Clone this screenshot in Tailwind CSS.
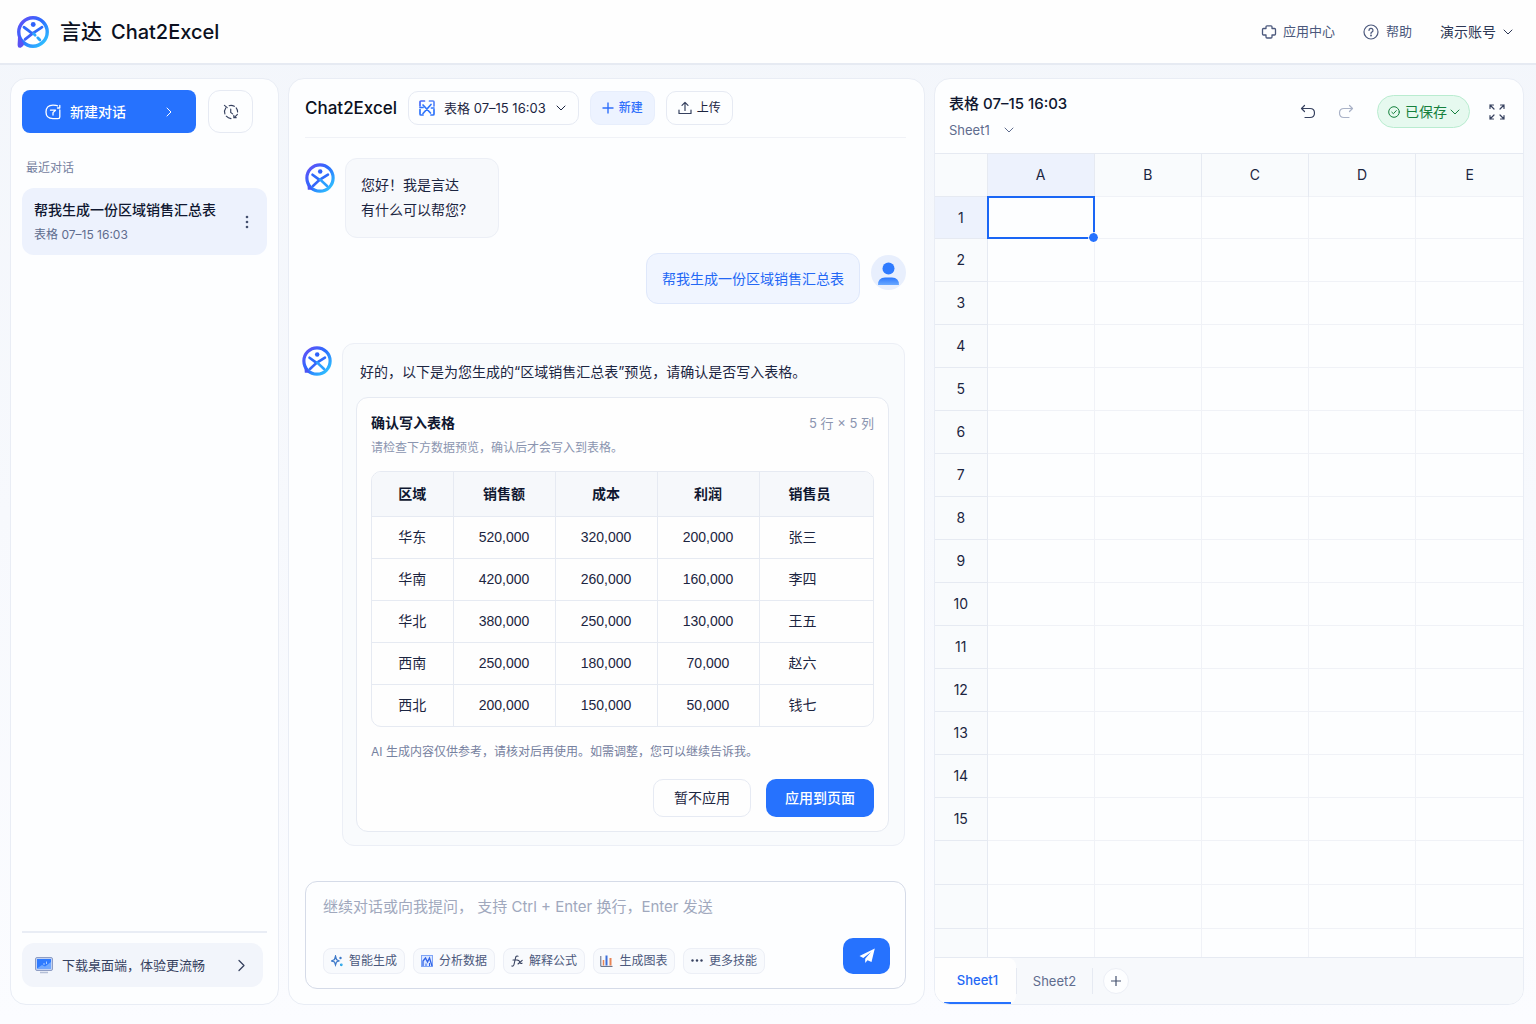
<!DOCTYPE html>
<html lang="zh-CN">
<head>
    <meta charset="UTF-8">
    <meta name="viewport" content="width=device-width, initial-scale=1.0">
    <title>言达 Chat2Excel</title>
    <script src="https://cdn.jsdelivr.net/npm/@tailwindcss/browser@4"></script>
</head>
<body class="min-h-screen flex flex-col bg-linear-to-b from-[#f3f6fb] to-[#fbfcff] font-['Inter','Noto_Sans_CJK_SC',sans-serif] text-sm text-[#1c2541]">

    <!-- Shared logo shapes -->
    <svg class="absolute w-0 h-0" aria-hidden="true">
        <defs>
            <linearGradient id="brand" x1="0" y1="0" x2="1" y2="1">
                <stop offset="0" stop-color="#6a4df5"/>
                <stop offset="0.45" stop-color="#2b6cff"/>
                <stop offset="1" stop-color="#2fd0ff"/>
            </linearGradient>
            <linearGradient id="person" x1="0" y1="0" x2="0" y2="1">
                <stop offset="0" stop-color="#2b78ff"/>
                <stop offset="1" stop-color="#6aa9ff"/>
            </linearGradient>
            <symbol id="logo" viewBox="0 0 32 32">
                <circle cx="16" cy="16" r="13.4" fill="#fff" stroke="url(#brand)" stroke-width="3.2"/>
                <path d="M2 18 L1.500 28.500 Q1.500 31.500 4.500 30.800 Q7 30 7.500 27.500 Z" fill="#5a52f3"/>
                <circle cx="16.200" cy="9" r="2.300" fill="#2f62fa"/>
                <path d="M7.500 11.500 C10 13 13 16 15.500 17.500 C18 16 21.500 13.500 24.500 11.500" fill="none" stroke="#2f6bfb" stroke-width="2.600" stroke-linecap="round"/>
                <path d="M16 17 L8.500 23" fill="none" stroke="#3f62f8" stroke-width="2.600" stroke-linecap="round"/>
                <path d="M16.500 17.500 L18 19 M20.500 21.500 L22.500 23.500" fill="none" stroke="#2ba6ff" stroke-width="2.600" stroke-linecap="round"/>
            </symbol>
            <symbol id="avatar" viewBox="0 0 32 32">
                <circle cx="16" cy="16" r="14" fill="#fff" stroke="url(#brand)" stroke-width="3.4"/>
                <path d="M2.500 22 L3 28.500 L9 28.500 Z" fill="#4a55f5"/>
                <circle cx="16.200" cy="9" r="2.400" fill="#2f62fa"/>
                <path d="M8 12.500 L15.500 18 L24.500 12.500" fill="none" stroke="#2f6bfb" stroke-width="2.800" stroke-linecap="round" stroke-linejoin="round"/>
                <path d="M16 17.500 L8.500 24.500" fill="none" stroke="#3666fa" stroke-width="2.800" stroke-linecap="round"/>
                <path d="M16 17.500 L23.500 24.500" fill="none" stroke="#2ba0ff" stroke-width="2.800" stroke-linecap="round"/>
            </symbol>
            <symbol id="chevron" viewBox="0 0 12 12">
                <path d="M2 4 L6 8 L10 4" fill="none" stroke="currentColor" stroke-linecap="round" stroke-linejoin="round"/>
            </symbol>
        </defs>
    </svg>

    <!-- Top bar -->
    <header class="h-[65px] shrink-0 flex items-center justify-between pl-4 pr-[22px] bg-[#fefefe] border-b-2 border-[#e6eaf2]">
        <a href="#" class="flex items-center text-[21px] font-medium text-[#0b1020]">
            <svg class="w-[34px] h-[34px] mr-[10px]"><use href="#logo"/></svg>
            <span class="mr-[9px]">言达</span>
            <span class="text-xl">Chat2Excel</span>
        </a>
        <nav class="flex items-center text-[#4b587c]">
            <a href="#" class="flex items-center gap-[6px] text-[13px] mr-[28px]">
                <svg class="w-4 h-4" viewBox="0 0 16 16" fill="none" stroke="currentColor" stroke-width="1.300" stroke-linejoin="round"><path d="M5 2.800 Q5 1.800 6 1.800 H10 Q11 1.800 11 2.800 V4.500 H13.500 Q14.500 4.500 14.500 5.500 V10 Q14.500 11 13.500 11 H11 V13 Q11 14 10 14 H6 Q5 14 5 13 V11 H2.500 Q1.500 11 1.500 10 V5.500 Q1.500 4.500 2.500 4.500 H5 Z"/></svg>
                应用中心
            </a>
            <a href="#" class="flex items-center gap-[7px] text-[13px] mr-[28px]">
                <svg class="w-4 h-4" viewBox="0 0 16 16" fill="none" stroke="currentColor" stroke-width="1.200" stroke-linecap="round"><circle cx="8" cy="8" r="7"/><path d="M6 6.500 A2 2 0 1 1 8.500 8.300 Q8 8.500 8 9.500"/><circle cx="8" cy="11.500" r="0.400"/></svg>
                帮助
            </a>
            <button type="button" class="flex items-center gap-[6px] text-[#2c3654]">演示账号
                <svg class="w-3 h-3"><use href="#chevron"/></svg>
            </button>
        </nav>
    </header>

    <main class="flex-1 grid grid-cols-[269px_minmax(0,637fr)_minmax(0,590fr)] gap-[9px] pl-[10px] pr-3 pt-[13px] pb-[19px]">

        <!-- Sidebar -->
        <aside class="flex flex-col px-[11px] pt-[11px] pb-[17px] bg-[#fdfeff] border border-[#e9edf5] rounded-2xl">
            <div class="flex gap-3">
                <button type="button" class="w-[174px] h-[43px] flex items-center pl-[23px] pr-[21px] rounded-lg bg-[#2672fe] text-white font-medium">
                    <svg class="w-4 h-4 mr-[9px]" viewBox="0 0 16 16" fill="none" stroke="currentColor" stroke-width="1.300" stroke-linecap="round" stroke-linejoin="round"><path d="M12.500 1.800 Q11.500 1.200 8 1.200 Q1 1.200 1 8 Q1 14.600 8 14.600 H13 Q14.800 14.600 14.800 13 V6"/><path d="M14.800 1.500 V4 H12.500"/><path d="M5.500 6.200 H10.500 L8 8.600 V11"/></svg>
                    <span class="flex-1 text-left">新建对话</span>
                    <svg class="w-3 h-3 -rotate-90"><use href="#chevron"/></svg>
                </button>
                <button type="button" aria-label="历史记录" class="w-[45px] h-[43px] flex items-center justify-center rounded-xl border border-[#e6eaf3] text-[#36415f]">
                    <svg class="w-4 h-4" viewBox="0 0 17 17" fill="none" stroke="currentColor" stroke-width="1.200" stroke-linecap="round"><path d="M1.500 1.500 L4.500 3.800"/><path d="M3 4.200 A7 7 0 0 0 2 10.500"/><path d="M3.500 13 A7 7 0 0 0 8.500 15.500"/><path d="M6.500 1.800 A7 7 0 0 1 12 2.500"/><path d="M14 4.200 A7 7 0 0 1 15.500 8.500"/><path d="M15.300 11 L12.500 14 M11.500 12 V14.500 H14"/><path d="M8.200 5.500 V9 L10.200 10.500"/></svg>
                </button>
            </div>

            <h2 class="mt-[26px] ml-1 text-xs leading-[18px] text-[#7681a0]">最近对话</h2>
            <div class="mt-[11px] h-[67px] flex items-center justify-between px-3 rounded-xl bg-[#edf2fd]">
                <a href="#" class="block">
                    <span class="block leading-[25px] font-medium text-[#0f1730]">帮我生成一份区域销售汇总表</span>
                    <span class="block text-xs leading-[25px] text-[#5f6c8e]">表格 07–15 16:03</span>
                </a>
                <button type="button" aria-label="更多" class="text-[#45516f]">
                    <svg class="w-4 h-4" viewBox="0 0 16 16" fill="currentColor"><circle cx="8" cy="3" r="1.300"/><circle cx="8" cy="8" r="1.300"/><circle cx="8" cy="13" r="1.300"/></svg>
                </button>
            </div>

            <div class="mt-auto border-t-2 border-[#e9edf5] pt-[10px] pr-1">
                <a href="#" class="h-[44px] flex items-center pl-[13px] pr-[14px] rounded-xl bg-[#f2f5fb] text-[13px] text-[#36415f]">
                    <svg class="w-[18px] h-[18px] mr-[9px]" viewBox="0 0 18 18"><rect x="0.500" y="1.500" width="17" height="13" rx="1.500" fill="#c3d2f2" stroke="#8e9dc4"/><rect x="2" y="3" width="14" height="9.500" fill="#2f7bff"/><path d="M2 12.500 L7 9 L10 10.500 L16 6 V12.500 Z" fill="#6fa8ff"/><path d="M9 9 V7 M11.500 8 V5.500" fill="none" stroke="#a9cbff"/><path d="M5 16.500 H13" stroke="#b4bfd6" stroke-width="1.500"/></svg>
                    <span class="flex-1">下载桌面端，体验更流畅</span>
                    <svg class="w-[15px] h-[15px] -rotate-90"><use href="#chevron"/></svg>
                </a>
            </div>
        </aside>

        <!-- Chat -->
        <section class="flex flex-col px-4 pb-[15px] bg-[#fdfeff] border border-[#e9edf5] rounded-2xl">
            <div class="h-[59px] shrink-0 mr-[2px] flex items-center border-b border-[#f0f2f7]">
                <h1 class="mr-[11px] text-[17px] font-medium text-[#0b1020]">Chat2Excel</h1>
                <button type="button" class="h-[34px] mr-[11px] flex items-center pl-[10px] pr-[11px] rounded-[10px] border border-[#e6eaf3] text-[#1c2541]">
                    <svg class="w-4 h-4 mr-[9px]" viewBox="0 0 16 16" fill="none" stroke="#2f74fb" stroke-width="1.700" stroke-linecap="round"><path d="M5.500 1 H2 Q1 1 1 2 V6" stroke="#4a6cf8"/><path d="M10.500 1 H14 Q15 1 15 2 V6" stroke="#5a86f8"/><path d="M1 9.500 V14 Q1 15 2 15 H4"/><path d="M15 9.500 V14 Q15 15 14 15 H12"/><path d="M4 5 L11.500 13 M12 4.500 L4 13.500 M1 7.500 H4 M12.500 8 H15"/></svg>
                    <span class="text-[13px]">表格 07–15 16:03</span>
                    <svg class="w-3 h-3 ml-[9px]"><use href="#chevron"/></svg>
                </button>
                <button type="button" class="h-[34px] mr-[11px] flex items-center gap-[5px] px-[11px] rounded-[10px] border border-[#e7eefc] bg-[#edf3ff] text-xs font-medium text-[#2f6ffb]">
                    <svg class="w-3 h-3" viewBox="0 0 12 12" stroke="currentColor" stroke-width="1.400"><path d="M6 0.500 V11.500 M0.500 6 H11.500"/></svg>
                    新建
                </button>
                <button type="button" class="h-[34px] flex items-center gap-[5px] px-[11px] rounded-[10px] border border-[#e6eaf3] text-xs text-[#1c2541]">
                    <svg class="w-[14px] h-[14px]" viewBox="0 0 14 14" fill="none" stroke="#36415f" stroke-width="1.200" stroke-linecap="round" stroke-linejoin="round"><path d="M7 9.500 V1.500 M4 4.300 L7 1.300 L10 4.300 M1 9 V12.500 H13 V9"/></svg>
                    上传
                </button>
            </div>

            <div class="flex-1 pt-5 pb-[35px]">
                <div class="flex items-start gap-[10px]">
                    <svg class="w-[30px] h-[30px] mt-[5px]"><use href="#avatar"/></svg>
                    <p class="w-[154px] h-[80px] pl-[15px] pt-[13px] rounded-xl border border-[#eceff6] bg-[#f7f9fc] leading-[25px]">您好！我是言达<br>有什么可以帮您?</p>
                </div>

                <div class="mt-[15px] mr-[2px] flex justify-end items-start gap-[11px]">
                    <p class="h-[51px] px-[15px] rounded-xl border border-[#dfe8fb] bg-[#f0f5ff] leading-[50px] text-[#2468f5]">帮我生成一份区域销售汇总表</p>
                    <svg class="w-[35px] h-[35px] mt-[2px]" viewBox="0 0 35 35"><circle cx="17.500" cy="17.500" r="17.500" fill="#e8effd"/><circle cx="17.500" cy="13.500" r="6" fill="#2f7bff"/><path d="M7 30 Q7 22.500 14 22.500 H21 Q28 22.500 28 30 Z" fill="url(#person)"/></svg>
                </div>

                <div class="mt-[39px] -ml-[3px] mr-[3px] flex items-start gap-[10px]">
                    <svg class="w-[30px] h-[30px] mt-[3px] shrink-0"><use href="#avatar"/></svg>
                    <div class="flex-1 min-w-0 p-[13px] rounded-xl border border-[#eceff6] bg-[#f9fbfd]">
                        <p class="ml-[4px] mt-[2px] leading-[25px]">好的，以下是为您生成的“区域销售汇总表”预览，请确认是否写入表格。</p>

                        <div class="mt-[13px] mr-[2px] px-[14px] pt-[13px] pb-[14px] rounded-xl border border-[#e6eaf2] bg-[#fefefe]">
                            <div class="flex items-center justify-between leading-[24px]">
                                <h2 class="font-bold text-[#0f1730]">确认写入表格</h2>
                                <span class="text-[13px] text-[#8b95b0]">5 行 × 5 列</span>
                            </div>
                            <p class="mt-[2px] leading-[22px] text-xs text-[#8b95b0]">请检查下方数据预览，确认后才会写入到表格。</p>

                            <div class="mt-3 overflow-hidden rounded-[10px] border border-[#e6eaf2]">
                                <table class="w-full table-fixed text-center font-['Liberation_Sans','Noto_Sans_CJK_SC',sans-serif] [&_th]:border-r [&_td]:border-r [&_th]:border-[#e6eaf2] [&_td]:border-[#e6eaf2] [&_tr>*:last-child]:border-r-0 [&_tr>*:last-child]:text-left [&_tr>*:last-child]:pl-[29px]">
                                    <colgroup>
                                        <col class="w-[81px]"><col class="w-[102px]"><col class="w-[102px]"><col class="w-[102px]"><col>
                                    </colgroup>
                                    <thead>
                                        <tr class="h-[44px] bg-[#f6f8fb] text-[#0f1730] font-bold">
                                            <th scope="col">区域</th><th scope="col">销售额</th><th scope="col">成本</th><th scope="col">利润</th><th scope="col">销售员</th>
                                        </tr>
                                    </thead>
                                    <tbody class="[&_tr]:h-[42px] [&_tr]:border-t [&_tr]:border-[#e6eaf2]">
                                        <tr><td>华东</td><td>520,000</td><td>320,000</td><td>200,000</td><td>张三</td></tr>
                                        <tr><td>华南</td><td>420,000</td><td>260,000</td><td>160,000</td><td>李四</td></tr>
                                        <tr><td>华北</td><td>380,000</td><td>250,000</td><td>130,000</td><td>王五</td></tr>
                                        <tr><td>西南</td><td>250,000</td><td>180,000</td><td>70,000</td><td>赵六</td></tr>
                                        <tr><td>西北</td><td>200,000</td><td>150,000</td><td>50,000</td><td>钱七</td></tr>
                                    </tbody>
                                </table>
                            </div>

                            <p class="mt-[14px] leading-[22px] text-xs text-[#7681a0]">AI 生成内容仅供参考，请核对后再使用。如需调整，您可以继续告诉我。</p>
                            <div class="mt-4 flex justify-end gap-[15px]">
                                <button type="button" class="h-[38px] w-[98px] rounded-[10px] border border-[#e6eaf3]">暂不应用</button>
                                <button type="button" class="h-[38px] w-[108px] rounded-[10px] bg-[#2672fe] text-white font-medium">应用到页面</button>
                            </div>
                        </div>
                    </div>
                </div>
            </div>

            <!-- Composer -->
            <form class="mr-[2px] pl-[17px] pr-[15px] pt-3 pb-[14px] rounded-xl border border-[#d5dbe8]">
                <input type="text" aria-label="输入消息" placeholder="继续对话或向我提问， 支持 Ctrl + Enter 换行，Enter 发送" class="block w-full h-[24px] bg-transparent outline-none text-[15px] placeholder:text-[#a0a8bd]">
                <div class="mt-5 flex items-end justify-between">
                    <div class="flex gap-2 text-xs text-[#4b587c]">
                        <button type="button" class="w-[82px] h-[26px] flex items-center justify-center gap-[6px] rounded-lg border border-[#eceff6] bg-[#f8fafd]">
                            <svg class="w-3 h-3" viewBox="0 0 12 12" fill="none" stroke="#3d79c9" stroke-width="1.200"><path d="M4.500 1 L5.500 4.500 L8 6 L5.500 7 L4.500 10 L3.500 7 L0.500 6 L3.500 4.500 Z"/><circle cx="9.500" cy="3" r="0.600"/><circle cx="10.300" cy="9.800" r="0.800" stroke="#29a5e8"/></svg>
                            智能生成
                        </button>
                        <button type="button" class="w-[82px] h-[26px] flex items-center justify-center gap-[6px] rounded-lg border border-[#eceff6] bg-[#f8fafd]">
                            <svg class="w-3 h-3" viewBox="0 0 12 12" fill="none"><rect x="0.500" y="0.500" width="11" height="11" fill="#dbe7ff" stroke="#7fa5f6"/><path d="M2 11 V6 L4.500 3 L6.500 7 L8.500 3 L11 11" stroke="#2f62e8" stroke-width="1.300"/><path d="M5 11 V8.500 M8.500 11 V8" stroke="#2f62e8"/></svg>
                            分析数据
                        </button>
                        <button type="button" class="w-[82px] h-[26px] flex items-center justify-center gap-[6px] rounded-lg border border-[#eceff6] bg-[#f8fafd]">
                            <svg class="w-3 h-3" viewBox="0 0 12 12" fill="none" stroke="#36415f" stroke-width="1.100" stroke-linecap="round"><path d="M7 1.200 Q5 0.500 4.500 3 L3 9.500 Q2.500 11.500 0.800 11 M2 5 H6.500 M7 5.500 Q8 5 8.700 7 Q9.500 9 11 8.200 M11.200 5.300 L7 9"/></svg>
                            解释公式
                        </button>
                        <button type="button" class="w-[82px] h-[26px] flex items-center justify-center gap-[6px] rounded-lg border border-[#eceff6] bg-[#f8fafd]">
                            <svg class="w-[13px] h-3" viewBox="0 0 13 12" fill="none"><path d="M0.800 1 V11.400 H12.500" stroke="#5b6680"/><path d="M3.500 10.500 V5" stroke="#e88455" stroke-width="1.500"/><path d="M6.500 10.500 V0.500" stroke="#3c6fd8" stroke-width="2"/><path d="M10.500 10.500 V3" stroke="#e88455" stroke-width="2"/></svg>
                            生成图表
                        </button>
                        <button type="button" class="w-[82px] h-[26px] flex items-center justify-center gap-[6px] rounded-lg border border-[#eceff6] bg-[#f8fafd]">
                            <svg class="w-3 h-3" viewBox="0 0 12 12" fill="#36415f"><circle cx="1.500" cy="5.500" r="1.200"/><circle cx="6" cy="5.500" r="1.200"/><circle cx="10.500" cy="5.500" r="1.200"/></svg>
                            更多技能
                        </button>
                    </div>
                    <button type="submit" aria-label="发送" class="w-[47px] h-[36px] flex items-center justify-center rounded-[10px] bg-[#2672fe]">
                        <svg class="w-4 h-4" viewBox="0 0 16 16" fill="#fff"><path d="M15.800 0.500 L0.500 8 L4.300 10 L12 4 L6.200 10.800 V15 L8.500 12.200 L12.500 14 Z"/></svg>
                    </button>
                </div>
            </form>
        </section>

        <!-- Spreadsheet -->
        <section class="flex flex-col overflow-hidden bg-[#fdfeff] border border-[#e9edf5] rounded-2xl">
            <div class="h-[74px] shrink-0 flex items-start justify-between pl-[14px] pr-[18px]">
                <div class="pt-[13px]">
                    <h2 class="text-[15px] leading-[24px] font-medium text-[#0f1730]">表格 07–15 16:03</h2>
                    <button type="button" class="mt-[2px] flex items-center gap-[13px] leading-[24px] text-[13px] text-[#5f6c8e]">Sheet1
                        <svg class="w-3 h-3"><use href="#chevron"/></svg>
                    </button>
                </div>
                <div class="pt-4 flex items-center">
                    <button type="button" aria-label="撤销" class="mr-[22px] text-[#36415f]">
                        <svg class="block w-4 h-4" viewBox="0 0 16 16" fill="none" stroke="currentColor" stroke-width="1.200" stroke-linecap="round" stroke-linejoin="round"><path d="M4.500 1.500 L1.500 4.500 L4.500 7.500 M1.500 4.500 H10 Q14.500 4.500 14.500 9 Q14.500 13.500 10 13.500 H5"/></svg>
                    </button>
                    <button type="button" aria-label="重做" class="mr-[23px] text-[#a9b2c7]">
                        <svg class="block w-4 h-4" viewBox="0 0 16 16" fill="none" stroke="currentColor" stroke-width="1.200" stroke-linecap="round" stroke-linejoin="round"><path d="M11.500 1.500 L14.500 4.500 L11.500 7.500 M14.500 4.500 H6 Q1.500 4.500 1.500 9 Q1.500 13.500 6 13.500 H11"/></svg>
                    </button>
                    <button type="button" class="h-[33px] mr-[19px] flex items-center pl-[10px] pr-[8px] rounded-full border border-[#b9ecd0] bg-[#e6f9ef] text-[#15803d]">
                        <svg class="w-3 h-3 mr-[5px]" viewBox="0 0 12 12" fill="none" stroke="currentColor" stroke-linecap="round"><circle cx="6" cy="6" r="5.300"/><path d="M3.800 6.200 L5.400 7.700 L8.300 4.600"/></svg>
                        已保存
                        <svg class="w-3 h-3 ml-[2px]"><use href="#chevron"/></svg>
                    </button>
                    <button type="button" aria-label="全屏" class="text-[#36415f]">
                        <svg class="block w-4 h-4" viewBox="0 0 16 16" fill="none" stroke="currentColor" stroke-width="1.200" stroke-linecap="round"><path d="M1 4.500 V1 H4.500 M1 1 L5 5 M11.500 1 H15 V4.500 M15 1 L11 5 M1 11.500 V15 H4.500 M1 15 L5 11 M11.500 15 H15 V11.500 M15 15 L11 11"/></svg>
                    </button>
                </div>
            </div>

            <div class="flex-1 basis-0 overflow-hidden">
                <table class="w-full table-fixed text-center [&_th]:font-normal [&_tr>*]:border-t [&_tr>*]:border-r [&_tr>*:last-child]:border-r-0 [&_td]:border-[#f0f2f7] [&_th]:border-[#e6eaf2] [&_th]:bg-[#f9fbfd]">
                    <colgroup><col class="w-[52px]"><col><col><col><col><col></colgroup>
                    <thead>
                        <tr class="h-[43px]">
                            <td class="bg-[#f9fbfd] border-[#e6eaf2]!"></td><th scope="col" class="bg-[#edf2fd]!">A</th><th scope="col">B</th><th scope="col">C</th><th scope="col">D</th><th scope="col">E</th>
                        </tr>
                    </thead>
                    <tbody id="rows">
                        <tr class="h-[42px]">
                            <th scope="row" class="bg-[#edf2fd]!">1</th>
                            <td class="relative">
                                <span class="absolute -inset-px border-2 border-[#1a66f5]"></span>
                                <span class="absolute -right-1 -bottom-1 w-[9px] h-[9px] rounded-full bg-[#2672fe] outline outline-white"></span>
                            </td>
                            <td></td><td></td><td></td><td></td>
                        </tr>
                    </tbody>
                </table>
            </div>

            <div class="h-[47px] shrink-0 flex items-center border-t border-[#e6eaf2] bg-[#f7f9fc] text-[13px] text-[#5f6c8e]">
                <button type="button" class="h-full w-[81px] pl-[9px] pr-[5px] rounded-r-lg bg-[#fefefe] font-medium text-[#2468f5]">
                    <span class="h-full flex items-center justify-center border-b-2 border-[#2672fe]">Sheet1</span>
                </button>
                <button type="button" class="h-[26px] w-[77px] border-x border-[#e6eaf2]">Sheet2</button>
                <button type="button" aria-label="新建工作表" class="ml-[10px] w-[26px] h-[26px] flex items-center justify-center rounded-full border border-[#eceff6] bg-[#fdfeff] text-[#45516f]">
                    <svg class="w-[10px] h-[10px]" viewBox="0 0 10 10" stroke="currentColor" stroke-width="1.200"><path d="M5 0 V10 M0 5 H10"/></svg>
                </button>
            </div>
        </section>
    </main>

    <script>
        // Fill the sheet with numbered rows, then a few blank ones
        const rows = document.getElementById('rows');
        for (let i = 2; i <= 18; i++) {
            const row = document.createElement('tr');
            row.className = i <= 15 ? 'h-[43px]' : 'h-[44px]';
            row.innerHTML = `<th scope="row">${i <= 15 ? i : ''}</th>` + '<td></td>'.repeat(5);
            rows.appendChild(row);
        }
    </script>
</body>
</html>
